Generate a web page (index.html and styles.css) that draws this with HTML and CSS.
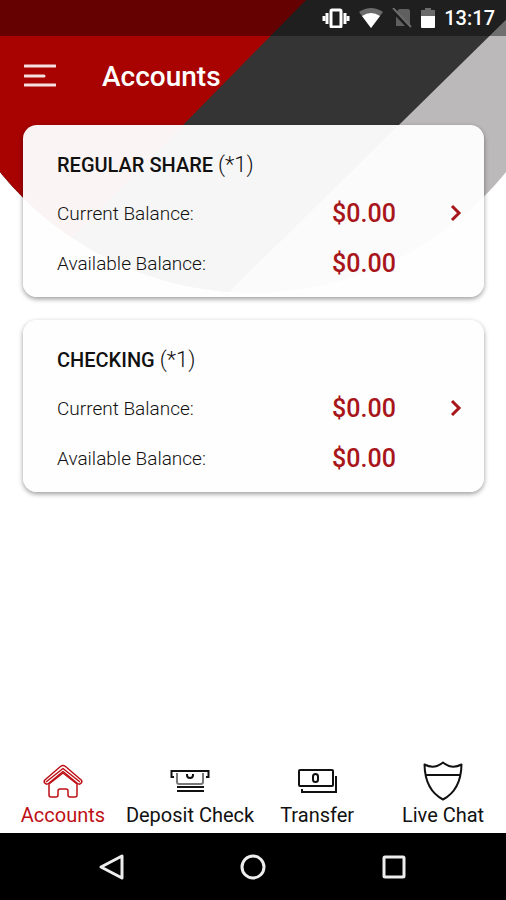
FILE: index.html
```
<!DOCTYPE html>
<html lang="en">
<head>
  <meta charset="UTF-8">
  <meta name="viewport" content="width=device-width, initial-scale=1.0">
  <title>Accounts</title>
  <link rel="stylesheet" href="styles.css">
</head>
<body>
  <svg class="backdrop" viewBox="0 0 506 293" aria-hidden="true">
    <clipPath id="curve"><circle cx="253" cy="-32" r="325"/></clipPath>
    <g clip-path="url(#curve)">
      <rect width="506" height="293" fill="#bbb9ba"/>
      <path d="M0 0H526L228 293H0Z" fill="#343434"/>
      <path d="M0 0H306L183 125L18 293H0Z" fill="#a80300"/>
    </g>
  </svg>

  <div class="status-bar">
    <svg width="28" height="20" viewBox="0 0 28 20">
      <rect x="9" y="2" width="10" height="17" rx="1" fill="none" stroke="#fff" stroke-width="3"/>
      <path d="M5 5v11M23 5v11" stroke="#fff" stroke-width="3"/>
      <path d="M2 8v5M26 8v5" stroke="#fff" stroke-width="3"/>
    </svg>
    <svg width="24" height="20" viewBox="0 0 24 20">
      <path d="M0 4Q12 -4 24 4L12 20Z" fill="#6b6b6b"/>
      <path d="M3 8Q12 2 21 8L12 20Z" fill="#fff"/>
    </svg>
    <svg width="20" height="20" viewBox="0 0 20 20">
      <path d="M7 1H16Q18 1 18 3V18H4V5Z" fill="#5f5f5f"/>
      <path d="M0 2L17 20" stroke="#1d1d1d" stroke-width="3"/>
      <path d="M1 0L19 19" stroke="#6b6b6b" stroke-width="2"/>
    </svg>
    <svg width="14" height="20" viewBox="0 0 14 20">
      <path d="M4 0H10V2H14V9H0V2H4Z" fill="#6b6b6b"/>
      <path d="M0 8H14V19Q14 20 13 20H1Q0 20 0 19Z" fill="#fff"/>
    </svg>
    <span class="clock">13:17</span>
  </div>

  <header class="top">
    <button class="menu" aria-label="Menu">
      <svg width="32" height="24" viewBox="0 0 32 24">
        <path d="M1 2H31M1 12H20M1 21H31" stroke="#fff" stroke-opacity=".88" stroke-width="3" stroke-linecap="round"/>
      </svg>
    </button>
    <h1>Accounts</h1>
  </header>

  <main>
    <section class="card">
      <h2>REGULAR SHARE <span>(*1)</span></h2>
      <dl>
        <dt>Current Balance:</dt>
        <dd>$0.00</dd>
        <dt>Available Balance:</dt>
        <dd>$0.00</dd>
      </dl>
      <a class="open" href="#regular-share" aria-label="Open Regular Share">
        <svg width="12" height="18" viewBox="0 0 12 18"><path d="M2 2L9 9L2 16" fill="none" stroke="#a8151a" stroke-width="3"/></svg>
      </a>
    </section>

    <section class="card">
      <h2>CHECKING <span>(*1)</span></h2>
      <dl>
        <dt>Current Balance:</dt>
        <dd>$0.00</dd>
        <dt>Available Balance:</dt>
        <dd>$0.00</dd>
      </dl>
      <a class="open" href="#checking" aria-label="Open Checking">
        <svg width="12" height="18" viewBox="0 0 12 18"><path d="M2 2L9 9L2 16" fill="none" stroke="#a8151a" stroke-width="3"/></svg>
      </a>
    </section>
  </main>

  <nav class="tabs">
    <a class="active" href="#accounts">
      <svg width="40" height="40" viewBox="0 0 40 40" fill="none" stroke="currentColor" stroke-width="1.5" stroke-linejoin="round">
        <path d="M17.5 5.500Q20 3.500 22.500 5.500L38.200 19Q39.500 20.500 38.200 22Q36.500 24 34.500 22.500L20 10.500L5.500 22.500Q3.500 24 1.800 22Q.5 20.500 1.800 19Z"/>
        <path d="M3 21L20 7.500L37 21"/>
        <path d="M6 23V34Q6 36 8 36H13Q15 36 15 34V30Q15 28 17 28H23Q25 28 25 30V34Q25 36 27 36H32Q34 36 34 34V23L20 12Z"/>
      </svg>
      Accounts
    </a>
    <a href="#deposit">
      <svg width="40" height="40" viewBox="0 0 40 40" fill="none" stroke="currentColor" stroke-width="2">
        <path d="M4 16H1.500V10H38.500V16H36"/>
        <path d="M7 12V21Q7 23 9 23H31Q33 23 33 21V12" stroke="#777"/>
        <path d="M17 13V14Q17 17 20 17Q23 17 23 14V13M7 26H34M7 30H34"/>
      </svg>
      Deposit Check
    </a>
    <a href="#transfer">
      <svg width="40" height="40" viewBox="0 0 40 40" fill="none" stroke="currentColor" stroke-width="2">
        <rect x="2" y="9" width="34" height="16" rx="1"/>
        <rect x="16" y="13" width="5" height="8" rx="2.500"/>
        <path d="M39 15V31H5V28"/>
      </svg>
      Transfer
    </a>
    <a href="#chat">
      <svg width="40" height="40" viewBox="0 0 40 40" fill="none" stroke="currentColor" stroke-width="2" stroke-linejoin="round">
        <path d="M1.500 3.500Q8 7 14 5Q17 4 20 1.500Q23 4 26 5Q32 7 38.500 3.500Q38 29 20 38.500Q2 29 1.500 3.500Z"/>
        <path d="M3 14H37"/>
      </svg>
      Live Chat
    </a>
  </nav>

  <div class="system-nav">
    <button aria-label="Back">
      <svg width="28" height="28" viewBox="0 0 28 28"><path d="M24 3V25L3 14Z" fill="none" stroke="#eee" stroke-width="3" stroke-linejoin="round"/></svg>
    </button>
    <button aria-label="Home">
      <svg width="28" height="28" viewBox="0 0 28 28"><circle cx="14" cy="14" r="11" fill="none" stroke="#eee" stroke-width="3"/></svg>
    </button>
    <button aria-label="Recent apps">
      <svg width="28" height="28" viewBox="0 0 28 28"><rect x="4" y="4" width="20" height="20" rx="1" fill="none" stroke="#eee" stroke-width="3"/></svg>
    </button>
  </div>
</body>
</html>
```
FILE: styles.css
```
* {
  box-sizing: border-box;
}

body {
  margin: 0;
  min-height: 100vh;
  display: flex;
  flex-direction: column;
  position: relative;
  background: #fff;
  color: #111;
  font-family: Roboto, sans-serif;
}

svg {
  display: block;
}

button {
  padding: 0;
  border: 0;
  background: none;
  cursor: pointer;
}

/* striped curve behind the header and the first card */
.backdrop {
  position: absolute;
  top: 0;
  left: 0;
  width: 100%;
  z-index: -1;
}

.status-bar {
  display: flex;
  align-items: center;
  justify-content: flex-end;
  gap: 9px;
  height: 36px;
  padding-right: 11px;
  background: rgba(0, 0, 0, 0.4);
  color: #fff;
}

.clock {
  font-size: 20px;
  font-weight: 500;
  line-height: 38px;
}

.top {
  display: flex;
  align-items: center;
  gap: 46px;
  height: 80px;
  padding: 0 24px;
  color: #fff;
}

h1 {
  margin: 0;
  font-size: 28px;
  font-weight: 500;
}

main {
  flex: 1;
  display: flex;
  flex-direction: column;
  gap: 23px;
  padding: 9px 22px 23px 23px;
}

.card {
  display: grid;
  grid-template-columns: 1fr 24px;
  padding: 16px 10px 8px 34px;
  border-radius: 14px;
  background: rgba(254, 254, 254, 0.96);
  box-shadow: 0 2px 5px rgba(0, 0, 0, 0.4);
}

h2 {
  grid-column: 1 / 3;
  margin: 0;
  font-size: 20px;
  font-weight: 500;
  line-height: 48px;
}

h2 span {
  font-size: 22px;
  font-weight: 300;
}

dl {
  display: grid;
  grid-template-columns: 70% 30%;
  margin: 0;
  line-height: 50px;
}

dt {
  font-size: 19px;
  font-weight: 300;
}

dd {
  margin: 0;
  color: #a8151a;
  font-size: 25px;
  font-weight: 500;
}

.open {
  display: flex;
  align-items: center;
  height: 48px;
}

.tabs {
  display: grid;
  grid-template-columns: repeat(4, 1fr);
  height: 72px;
}

.tabs a {
  display: flex;
  flex-direction: column;
  align-items: center;
  color: #111;
  font-size: 20px;
  line-height: 28px;
  white-space: nowrap;
  text-decoration: none;
}

.tabs .active {
  color: #bd1016;
}

.system-nav {
  display: flex;
  align-items: center;
  justify-content: center;
  gap: 113px;
  height: 67px;
  background: #000;
}
```
